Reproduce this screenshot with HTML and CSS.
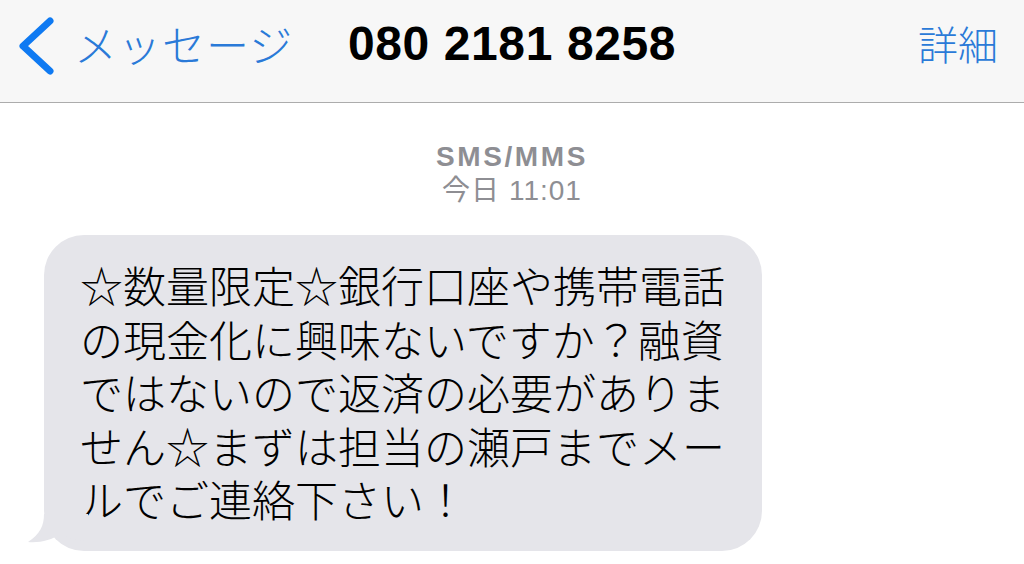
FILE: index.html
```html
<!DOCTYPE html>
<html lang="ja">
<head>
    <meta charset="UTF-8">
    <title>080 2181 8258</title>
    <link rel="stylesheet" href="styles.css">
</head>
<body>
<div class="nav">
    <a class="back" href="#">
        <svg class="chevron" width="44" height="58" viewBox="0 0 44 58">
            <polyline points="38,4 11,29 38,54" fill="none" stroke="#0f7af2" stroke-width="7" stroke-linecap="round" stroke-linejoin="round"/>
        </svg>
        <span class="back-text">メッセージ</span>
    </a>
    <div class="title">080 2181 8258</div>
    <a class="detail" href="#">詳細</a>
</div>

<div class="thread">
    <div class="info">
        <div class="service">SMS/MMS</div>
        <div class="time">今日 11:01</div>
    </div>

    <div class="bubble">
        <p class="msg">☆数量限定☆銀行口座や携帯電話の現金化に興味ないですか？融資ではないので返済の必要がありません☆まずは担当の瀬戸までメールでご連絡下さい！</p>
        <svg class="tail" width="60" height="40" viewBox="0 0 60 40">
            <path d="M16 0 C16 12 12 20 0 28 C12 29 24 26 32 20 C40 24 48 26 60 27 L60 0 Z" fill="#e5e5ea"/>
        </svg>
    </div>
</div>
</body>
</html>
```

FILE: styles.css
```css
* {
    margin: 0;
    padding: 0;
}

body {
    background-color: #fff;
    font-family: "Noto Sans CJK JP", sans-serif;
    width: 1024px;
    height: 564px;
    overflow: hidden;
}

a {
    text-decoration: none;
}

.nav {
    height: 103px;
    border-bottom: 1px solid #acacac;
    background-color: #f7f7f7;
    display: flex;
    align-items: center;
    justify-content: space-between;
    padding: 0 26px 16px 12px;
    box-sizing: border-box;
    position: relative;
}

.back {
    display: flex;
    align-items: center;
    gap: 18px;
    color: #2a7ad8;
}

.chevron {
    margin-top: 6px;
}

.back-text {
    font-size: 43px;
    font-weight: 300;
    letter-spacing: 1px;
    line-height: 50px;
}

.title {
    position: absolute;
    left: 0;
    right: 0;
    top: 18px;
    text-align: center;
    font-family: "Liberation Sans", Arial, sans-serif;
    font-weight: bold;
    font-size: 48px;
    letter-spacing: 0.6px;
    line-height: 52px;
    color: #000;
    pointer-events: none;
}

.detail {
    font-size: 40px;
    font-weight: 300;
    line-height: 50px;
    color: #2a7ad8;
}

.thread {
    padding-top: 37px;
}

.info {
    text-align: center;
    color: #8e8e93;
}

.service {
    font-family: "Liberation Sans", Arial, sans-serif;
    font-weight: bold;
    font-size: 28px;
    letter-spacing: 2.6px;
    line-height: 34px;
}

.time {
    font-family: "Liberation Sans", "Noto Sans CJK JP", sans-serif;
    font-size: 28px;
    line-height: 34px;
    letter-spacing: 1px;
}

.bubble {
    position: relative;
    margin: 27px 0 0 44px;
    width: 718px;
    box-sizing: border-box;
    padding: 23px 36px 25px 36px;
    background-color: #e5e5ea;
    border-radius: 40px;
}

.msg {
    font-size: 43px;
    font-weight: 300;
    line-height: 53.6px;
    color: #000;
}

.tail {
    position: absolute;
    left: -16px;
    bottom: -3px;
}
```
